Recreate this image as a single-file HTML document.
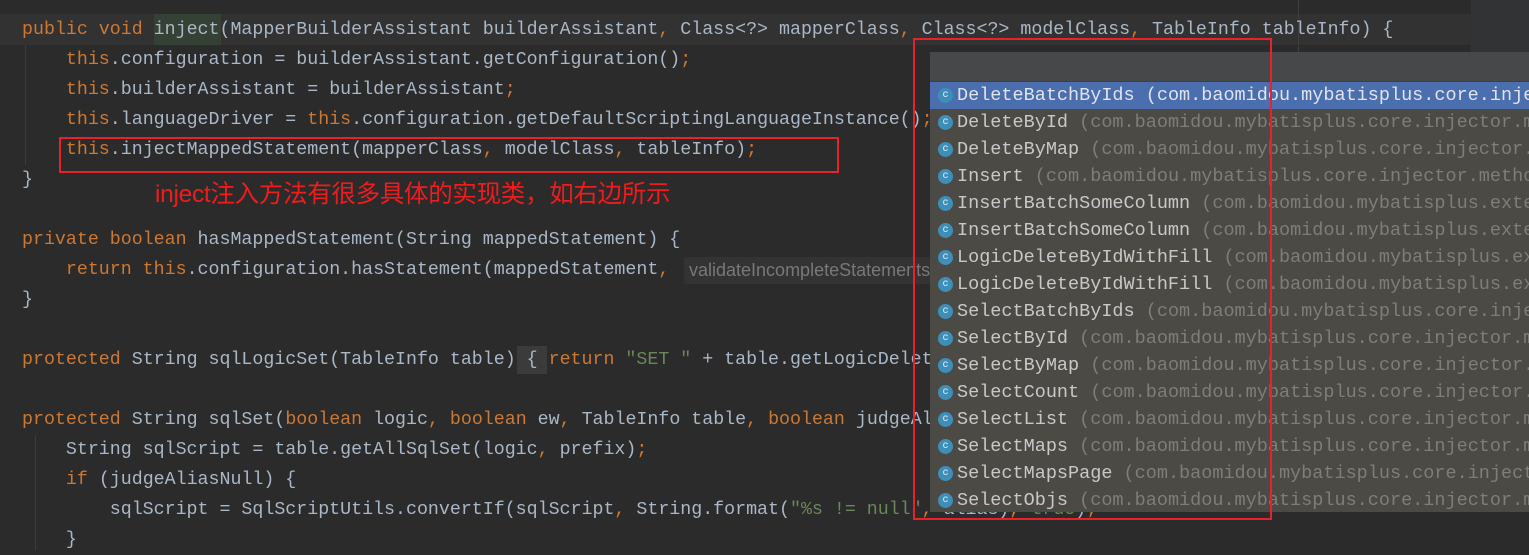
<!DOCTYPE html>
<html><head><meta charset="utf-8"><style>
body{margin:0;width:1529px;height:550px;background:#2b2b2b;overflow:hidden;position:relative;font-family:"Liberation Mono",monospace;font-size:18.3px;color:#a9b7c6}
.l{position:absolute;left:22px;height:30px;line-height:30px;white-space:pre}
.k{color:#cc7832}.s{color:#6a8759}.g{color:#787878}
.red{position:absolute;border:2px solid #e8222a}
#pop{position:absolute;left:930px;top:52px;width:600px;height:460px;background:#4c4a44;overflow:hidden;font-size:18.5px}
#pop .h{height:29px;background:#46484a;border-bottom:1px solid #3d3f41}
#pop .r{height:27px;line-height:27px;white-space:pre;padding-left:27px;position:relative;color:#c8c8c8}
#pop .r span{color:#7e7d77}
#pop .r.sel{background:#4b6eaf;color:#dfe4ee}
#pop .r.sel span{color:#dfe4ee}
#pop .r i{position:absolute;left:8px;top:6px;width:15px;height:15px;border-radius:50%;background:#3d8eb9;font-style:normal;font-size:10px;line-height:15px;text-align:center;color:#e8eef2}
</style></head><body>
<div style="position:absolute;left:0;top:14px;width:1471px;height:31px;background:#323232"></div>
<div style="position:absolute;left:1471px;top:0;width:58px;height:52px;background:#313335"></div>
<div style="position:absolute;left:1298px;top:0;width:1px;height:52px;background:#3e3e3e"></div>
<div style="position:absolute;left:154px;top:14px;width:67px;height:31px;background:#344134"></div>
<div style="position:absolute;left:25px;top:45px;width:1px;height:120px;background:#3b3b3b"></div>
<div style="position:absolute;left:35px;top:435px;width:1px;height:115px;background:#3b3b3b"></div>

<div class="l" style="top:15px"><span class="k">public void </span>inject(MapperBuilderAssistant builderAssistant<span class="k">, </span>Class&lt;?&gt; mapperClass<span class="k">, </span>Class&lt;?&gt; modelClass<span class="k">, </span>TableInfo tableInfo) {</div>
<div class="l" style="top:45px">    <span class="k">this</span>.configuration = builderAssistant.getConfiguration()<span class="k">;</span></div>
<div class="l" style="top:75px">    <span class="k">this</span>.builderAssistant = builderAssistant<span class="k">;</span></div>
<div class="l" style="top:105px">    <span class="k">this</span>.languageDriver = <span class="k">this</span>.configuration.getDefaultScriptingLanguageInstance()<span class="k">;</span></div>
<div class="l" style="top:135px">    <span class="k">this</span>.injectMappedStatement(mapperClass<span class="k">, </span>modelClass<span class="k">, </span>tableInfo)<span class="k">;</span></div>
<div class="l" style="top:165px">}</div>
<div style="position:absolute;left:155px;top:178px;font-family:'Liberation Sans','Noto Sans CJK SC',sans-serif;font-size:24.5px;color:#f01c1c;line-height:34px;letter-spacing:-0.3px">inject注入方法有很多具体的实现类，如右边所示</div>
<div class="l" style="top:225px"><span class="k">private boolean </span>hasMappedStatement(String mappedStatement) {</div>
<div class="l" style="top:255px">    <span class="k">return this</span>.configuration.hasStatement(mappedStatement<span class="k">, </span></div>
<div style="position:absolute;left:684px;top:257px;width:250px;height:27px;background:#333333;border-radius:3px;color:#787878;font-family:'Liberation Sans',sans-serif;font-size:18px;line-height:27px;padding-left:5px;white-space:pre">validateIncompleteStatements: false</div>
<div class="l" style="top:285px">}</div>
<div style="position:absolute;left:517px;top:346px;width:30px;height:28px;background:#3b3b3b"></div>
<div class="l" style="top:345px"><span class="k">protected </span>String sqlLogicSet(TableInfo table) { <span class="k">return </span><span class="s">"SET "</span> + table.getLogicDeleteSql()</div>
<div class="l" style="top:405px"><span class="k">protected </span>String sqlSet(<span class="k">boolean </span>logic<span class="k">, boolean </span>ew<span class="k">, </span>TableInfo table<span class="k">, boolean </span>judgeAliasNull</div>
<div class="l" style="top:435px">    String sqlScript = table.getAllSqlSet(logic<span class="k">, </span>prefix)<span class="k">;</span></div>
<div class="l" style="top:465px">    <span class="k">if </span>(judgeAliasNull) {</div>
<div class="l" style="top:495px">        sqlScript = SqlScriptUtils.convertIf(sqlScript<span class="k">, </span>String.format(<span class="s">"%s != null"</span><span class="k">, </span>alias)<span class="k">, </span><span class="s">true</span>)<span class="k">;</span></div>
<div class="l" style="top:525px">    }</div>

<div id="pop">
<div class="h"></div>
<div class="r sel"><i>c</i>DeleteBatchByIds <span>(com.baomidou.mybatisplus.core.injector.methods)</span></div>
<div class="r"><i>c</i>DeleteById <span>(com.baomidou.mybatisplus.core.injector.methods)</span></div>
<div class="r"><i>c</i>DeleteByMap <span>(com.baomidou.mybatisplus.core.injector.methods)</span></div>
<div class="r"><i>c</i>Insert <span>(com.baomidou.mybatisplus.core.injector.methods)</span></div>
<div class="r"><i>c</i>InsertBatchSomeColumn <span>(com.baomidou.mybatisplus.extension)</span></div>
<div class="r"><i>c</i>InsertBatchSomeColumn <span>(com.baomidou.mybatisplus.extension)</span></div>
<div class="r"><i>c</i>LogicDeleteByIdWithFill <span>(com.baomidou.mybatisplus.extension)</span></div>
<div class="r"><i>c</i>LogicDeleteByIdWithFill <span>(com.baomidou.mybatisplus.extension)</span></div>
<div class="r"><i>c</i>SelectBatchByIds <span>(com.baomidou.mybatisplus.core.injector)</span></div>
<div class="r"><i>c</i>SelectById <span>(com.baomidou.mybatisplus.core.injector.methods)</span></div>
<div class="r"><i>c</i>SelectByMap <span>(com.baomidou.mybatisplus.core.injector.methods)</span></div>
<div class="r"><i>c</i>SelectCount <span>(com.baomidou.mybatisplus.core.injector.methods)</span></div>
<div class="r"><i>c</i>SelectList <span>(com.baomidou.mybatisplus.core.injector.methods)</span></div>
<div class="r"><i>c</i>SelectMaps <span>(com.baomidou.mybatisplus.core.injector.methods)</span></div>
<div class="r"><i>c</i>SelectMapsPage <span>(com.baomidou.mybatisplus.core.injector)</span></div>
<div class="r"><i>c</i>SelectObjs <span>(com.baomidou.mybatisplus.core.injector.methods)</span></div>
</div>

<div class="red" style="left:59px;top:137px;width:776px;height:32px"></div>
<div class="red" style="left:913px;top:38px;width:355px;height:478px"></div>
</body></html>
